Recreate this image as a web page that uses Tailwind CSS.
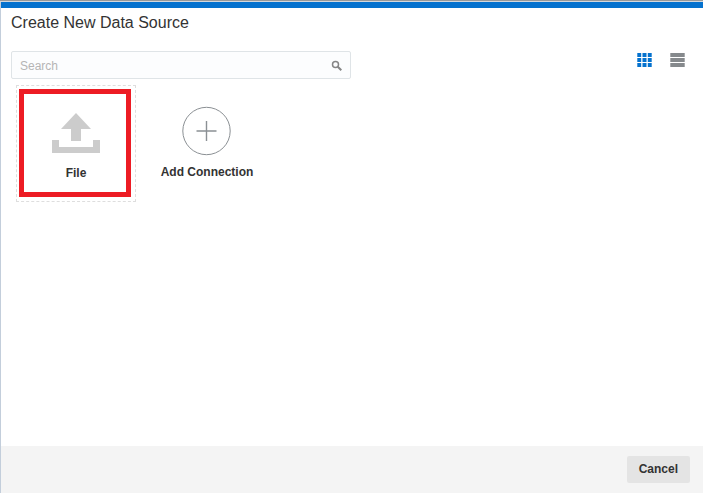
<!DOCTYPE html>
<html lang="en">
<head>
<meta charset="utf-8">
<title>Create New Data Source</title>
<script src="https://cdn.jsdelivr.net/npm/@tailwindcss/browser@4"></script>
</head>
<body class="bg-white font-['Liberation_Sans',Arial,sans-serif] text-[#333333]">
<div class="flex min-h-screen flex-col border-t border-[#999999] pb-px">
  <div class="h-px bg-[#d5d8dc]"></div>
  <main class="flex grow flex-col border-l border-[#c3cedb]">
    <div class="h-1.5 bg-[#0572ce]"></div>
    <h1 class="px-2.5 pt-[5px] text-[16px] leading-5">Create New Data Source</h1>
    <div class="flex items-start justify-between pt-[18px] pr-[18px] pl-2.5">
      <form role="search" class="flex h-7 w-[340px] items-center rounded-xs border border-[#dfe4e7] bg-[#fcfdfe] pt-px pr-[7px] pl-2">
        <input type="search" aria-label="Search" placeholder="Search" class="min-w-0 grow bg-transparent text-[12px] leading-4 outline-none placeholder:text-[#b5b5b5]">
        <button type="button" aria-label="Search" class="shrink-0">
          <svg class="block size-3" viewBox="0 0 12 12" fill="none" stroke="#858585"><circle cx="4.5" cy="4.5" r="3" stroke-width="1.5"/><path d="M6.8 6.8 10.3 10.3" stroke-width="2"/></svg>
        </button>
      </form>
      <div class="flex gap-[18px] pt-0.5">
        <button type="button" aria-label="Grid view" aria-pressed="true">
          <svg class="block size-[15px]" viewBox="0 0 15 15" fill="#0572ce"><path d="M.3 0h3.9v4H.3zM5.5 0h4v4h-4zM10.8 0h3.9v4h-3.9zM.3 5h3.9v4H.3zM5.5 5h4v4h-4zM10.8 5h3.9v4h-3.9zM.3 10h3.9v4H.3zM5.5 10h4v4h-4zM10.8 10h3.9v4h-3.9z"/></svg>
        </button>
        <button type="button" aria-label="List view" aria-pressed="false">
          <svg class="block size-[15px]" viewBox="0 0 15 15" fill="#85898c"><path d="M.3 0h14.4v4H.3zM.3 5h14.4v4H.3zM.3 10h14.4v4H.3z"/></svg>
        </button>
      </div>
    </div>
    <div class="flex flex-wrap gap-[11px] px-[15px] pt-1.5">
      <button type="button" class="flex h-[117px] w-[120px] border border-dashed border-[#dedede] pt-[3px] pr-1 pb-1 pl-0.5">
        <span class="flex h-full grow flex-col items-center border-5 border-[#ed1c24] pt-[19px] pl-0.5">
          <svg class="block h-10 w-12" viewBox="0 0 48 40" fill="#cccccc"><path d="M24 0 39 16H29V28H19V16H9zM0 27h7v7h34v-7h7v13H0z"/></svg>
          <span class="pt-3 text-[12px] leading-4 font-bold">File</span>
        </span>
      </button>
      <button type="button" class="flex h-[117px] w-[120px] flex-col items-center pt-[21px]">
        <svg class="block size-[50px]" viewBox="0 0 50 50" fill="none" stroke="#8b9094"><circle cx="24.5" cy="25" r="23.7"/><path d="M14.5 25h20M24.5 15v20" stroke-width="1.4"/></svg>
        <span class="pt-2 text-[12px] leading-4 font-bold">Add Connection</span>
      </button>
    </div>
    <footer class="mt-auto flex justify-end bg-[#f4f4f4] px-[13px] py-2.5">
      <button type="button" class="rounded-xs bg-[#e4e4e4] px-3 py-[5px] text-[12px] leading-[17px] font-bold">Cancel</button>
    </footer>
  </main>
</div>
</body>
</html>
